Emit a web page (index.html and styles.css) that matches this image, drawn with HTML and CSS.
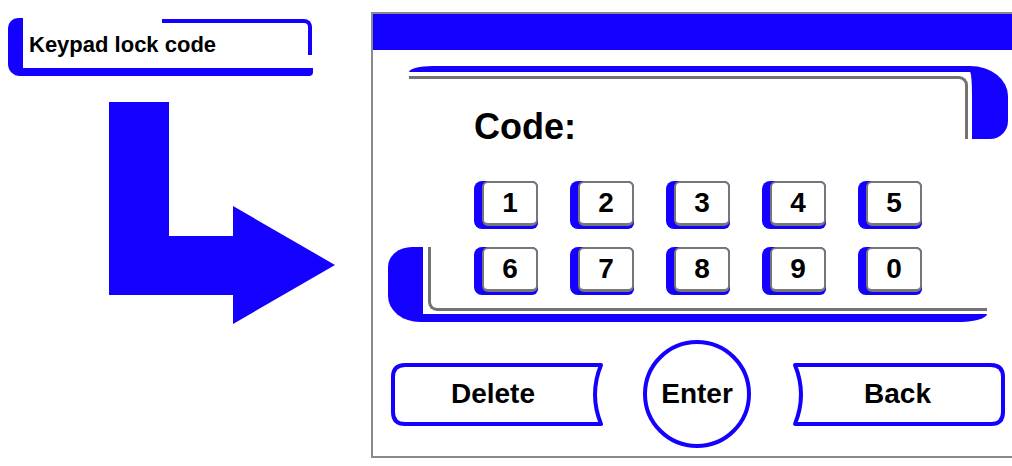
FILE: index.html
```html
<!DOCTYPE html>
<html lang="en">
<head>
<meta charset="utf-8">
<title>Keypad lock code</title>
<link rel="stylesheet" href="styles.css">
</head>
<body>
<div class="left">
  <div class="label">Keypad lock code</div>
  <svg class="arrow" width="226" height="222" viewBox="0 0 226 222">
    <polygon points="0,0 60,0 60,134 124,134 124,104 226,163 124,222 124,193 0,193" fill="#1400ff"/>
  </svg>
</div>
<div class="panel">
  <div class="header"></div>
  <div class="code-frame">
    <div class="code-inner">
      <div class="code-label">Code:</div>
    </div>
  </div>
  <div class="keys keys-top">
    <div class="key"><div class="face">1</div></div>
    <div class="key"><div class="face">2</div></div>
    <div class="key"><div class="face">3</div></div>
    <div class="key"><div class="face">4</div></div>
    <div class="key"><div class="face">5</div></div>
  </div>
  <div class="key-frame">
    <div class="key-inner">
      <div class="keys">
        <div class="key"><div class="face">6</div></div>
        <div class="key"><div class="face">7</div></div>
        <div class="key"><div class="face">8</div></div>
        <div class="key"><div class="face">9</div></div>
        <div class="key"><div class="face">0</div></div>
      </div>
    </div>
  </div>
  <div class="actions">
    <div class="shape-btn delete">
      <svg width="212" height="63" viewBox="0 0 212 63">
        <path d="M14 2 H210 Q198 31.5 210 61 H14 Q2 61 2 49 V14 Q2 2 14 2 Z" fill="#fff" stroke="#1400ff" stroke-width="4" stroke-linejoin="round"/>
      </svg>
      <span class="btn-text">Delete</span>
    </div>
    <div class="enter">Enter</div>
    <div class="shape-btn back">
      <svg width="213" height="63" viewBox="0 0 213 63">
        <path d="M3 2 Q15 31.5 3 61 H199 Q211 61 211 49 V14 Q211 2 199 2 Z" fill="#fff" stroke="#1400ff" stroke-width="4" stroke-linejoin="round"/>
      </svg>
      <span class="btn-text">Back</span>
    </div>
  </div>
</div>
</body>
</html>
```
FILE: styles.css
```css
html, body {
  margin: 0;
  padding: 0;
  background: #fff;
}

body {
  width: 1012px;
  height: 466px;
  overflow: hidden;
  display: flex;
  font-family: "Liberation Sans", Arial, sans-serif;
  color: #000;
}

.left {
  flex: 0 0 371px;
  box-sizing: border-box;
  padding: 18px 0 0 8px;
  display: flex;
  flex-direction: column;
  align-items: flex-start;
}

.label {
  position: relative;
  width: 305px;
  height: 58px;
  box-sizing: border-box;
  border-left: 15px solid #1400ff;
  border-bottom: 8px solid #1400ff;
  border-radius: 10px 0 4px 12px;
  padding: 4px 0 0 6px;
  font-weight: bold;
  font-size: 22px;
  line-height: 46px;
  white-space: nowrap;
}

.label::after {
  content: "";
  position: absolute;
  top: 1px;
  right: 1px;
  width: 150px;
  height: 36px;
  box-sizing: border-box;
  border-top: 4px solid #1400ff;
  border-right: 4px solid #1400ff;
  border-top-right-radius: 8px;
}

.arrow {
  display: block;
  margin: 26px 0 0 101px;
}

.panel {
  flex: 0 0 660px;
  margin-top: 12px;
  height: 446px;
  box-sizing: border-box;
  border-left: 2px solid #8a8a8a;
  border-top: 2px solid #8a8a8a;
  border-bottom: 2px solid #8a8a8a;
  display: flex;
  flex-direction: column;
  align-items: flex-start;
}

.header {
  align-self: stretch;
  height: 36px;
  background: #1400ff;
  flex-shrink: 0;
}

.code-frame {
  margin: 16px 0 0 36px;
  width: 599px;
  height: 73px;
  box-sizing: border-box;
  border-top: 6px solid #1400ff;
  border-right: 36px solid #1400ff;
  border-radius: 24px 38px 18px 0 / 6px 30px 18px 0;
  padding: 4px 4px 0 0;
  flex-shrink: 0;
}

.code-inner {
  height: 63px;
  box-sizing: border-box;
  border-top: 3px solid #737373;
  border-right: 3px solid #737373;
  border-top-right-radius: 9px;
  padding: 30px 0 0 65px;
}

.code-label {
  font-weight: bold;
  font-size: 36px;
  line-height: 36px;
}

.keys {
  display: flex;
  gap: 32px;
}

.keys-top {
  margin: 42px 0 0 101px;
}

.key {
  width: 64px;
  height: 48px;
  background: #1400ff;
  border-radius: 8px 6px 6px 8px;
  display: flex;
  justify-content: flex-end;
  align-items: flex-start;
  flex-shrink: 0;
}

.face {
  width: 56px;
  height: 45px;
  box-sizing: border-box;
  border: 2px solid #777;
  border-bottom-width: 3px;
  border-radius: 6px;
  background: #fff;
  display: flex;
  align-items: center;
  justify-content: center;
  font-weight: bold;
  font-size: 28px;
  line-height: 1;
}

.key-frame {
  margin: 18px 0 0 15px;
  width: 599px;
  height: 75px;
  box-sizing: border-box;
  border-left: 35px solid #1400ff;
  border-bottom: 8px solid #1400ff;
  border-radius: 24px 0 30px 32px / 20px 0 8px 26px;
  padding: 0 0 3px 5px;
  flex-shrink: 0;
}

.key-inner {
  height: 64px;
  box-sizing: border-box;
  border-left: 3px solid #737373;
  border-bottom: 3px solid #737373;
  border-bottom-left-radius: 9px;
  padding-left: 43px;
}

.actions {
  margin: 18px 0 0 18px;
  height: 108px;
  display: flex;
  align-items: center;
  flex-shrink: 0;
}

.shape-btn {
  display: grid;
  place-items: center;
}

.shape-btn > svg,
.shape-btn > .btn-text {
  grid-area: 1 / 1;
}

.shape-btn > svg {
  display: block;
}

.btn-text {
  font-weight: bold;
  font-size: 28px;
}

.delete .btn-text {
  padding-right: 8px;
}

.back .btn-text {
  padding-right: 2px;
}

.enter {
  margin: 0 41px 0 40px;
  width: 108px;
  height: 108px;
  box-sizing: border-box;
  border: 4px solid #1400ff;
  border-radius: 50%;
  display: flex;
  align-items: center;
  justify-content: center;
  font-weight: bold;
  font-size: 28px;
}
```
